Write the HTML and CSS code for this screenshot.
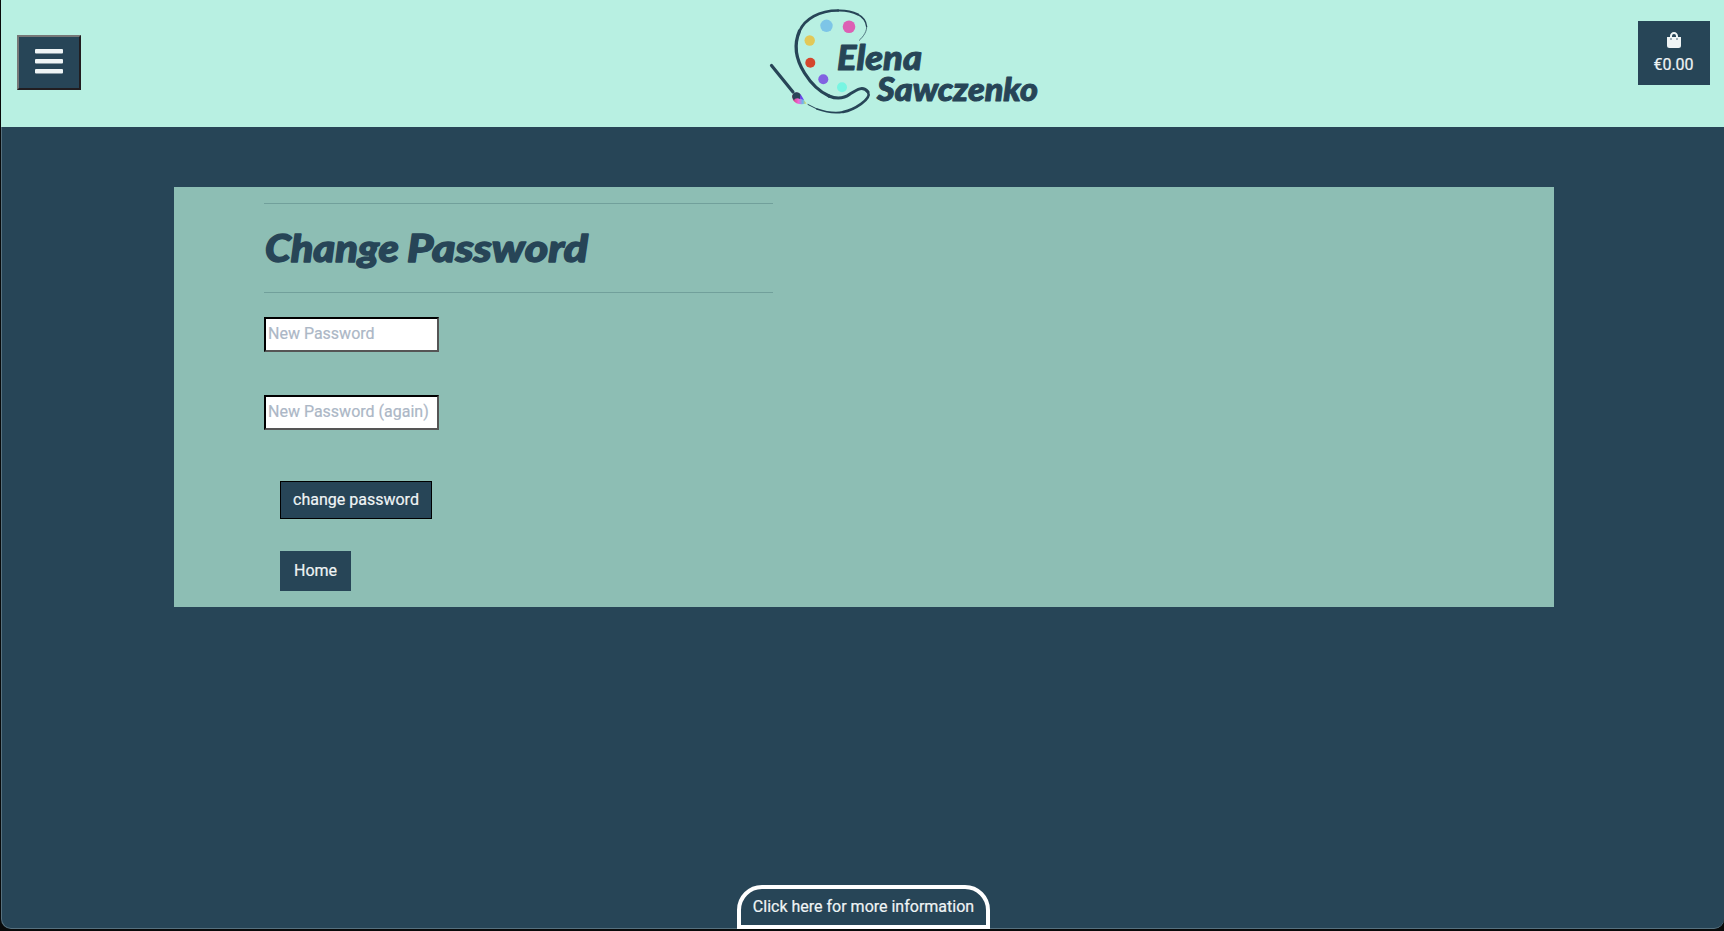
FILE: index.html
```html
<!DOCTYPE html>
<html lang="en">
<head>
<meta charset="utf-8">
<title>Change Password - Elena Sawczenko</title>
<link rel="stylesheet" href="styles.css">
</head>
<body>
<div class="window">
  <header class="header">
    <button class="menu" aria-label="Menu"><svg width="28" height="32" viewBox="0 0 28 32"><g fill="#eff4f5"><rect y="3" width="28" height="4.600" rx="1"/><rect y="13" width="28" height="4.600" rx="1"/><rect y="23" width="28" height="4.600" rx="1"/></g></svg></button>
    <svg class="logo" width="290" height="127" viewBox="0 0 290 127" role="img" aria-label="Elena Sawczenko">
      <defs><linearGradient id="tip" x1="0" y1="0" x2="1" y2="0"><stop offset="0" stop-color="#d33c70"/><stop offset=".45" stop-color="#ed66d7"/><stop offset=".75" stop-color="#67b8ed"/><stop offset="1" stop-color="#f0df45"/></linearGradient></defs>
      <g fill="none" stroke="#274557" stroke-linecap="round">
        <path d="M99.300 40.300C104 36 107 31 106.600 26.500" stroke-width="1" stroke-opacity=".7"/>
        <path d="M106.600 26.500C106 21 103 17 98 14.500" stroke-width="1.400"/>
        <path d="M98 14.500C92 11.500 85 10.300 78 10.500" stroke-width="2"/>
        <path d="M78 10.500C59 10.500 45 19 39.500 31" stroke-width="2.600"/>
        <path d="M39.500 31C33 46 37 61 44.500 73C52 85 60 92 69 96" stroke-width="3.300"/>
        <path d="M69 96C76 99 84 98.500 90 94C97 89.500 103 85.500 108 92" stroke-width="3"/>
        <path d="M108 92C112 99 94 110 83 112" stroke-width="2.500"/>
        <path d="M83 112C74 113.500 64 111.500 57 109" stroke-width="1.800"/>
        <path d="M57 109L48 104.500" stroke-width="1"/>
        <path d="M11.500 65.500L33 92" stroke-width="3.200"/>
      </g>
      <path d="M32 96C35 91 40 92 41 96L46.500 103.500C41 105 35 104 33 100Z" fill="url(#tip)"/>
      <path d="M32.500 98C31 92 39 90 41 95.500L40 99C37 97.500 34.500 98.500 34 100.500Z" fill="#274557"/>
      <path d="M40.500 94L44 100L40 98.500Z" fill="#6944ed"/>
      <circle cx="66.500" cy="25.800" r="6.200" fill="#7dc5e7"/><circle cx="89" cy="26.800" r="6.300" fill="#dc60b4"/>
      <circle cx="49.700" cy="40.500" r="5.200" fill="#e2c858"/><circle cx="50.300" cy="62.700" r="5" fill="#d4462d"/>
      <circle cx="63.300" cy="79.300" r="5" fill="#8162e1"/><circle cx="82" cy="87.200" r="5" fill="#77f5e2"/>
      <text class="brand" x="77" y="69.500" textLength="85" lengthAdjust="spacingAndGlyphs">Elena</text>
      <text class="brand brand-last" x="117" y="100.500" textLength="161" lengthAdjust="spacingAndGlyphs">Sawczenko</text>
    </svg>
    <a class="bag"><svg width="14" height="16" viewBox="0 0 448 512"><path fill="#eff4f5" d="M352 160V128C352 57 295 0 224 0S96 57 96 128v32H0v272a80 80 0 0 0 80 80h288a80 80 0 0 0 80-80V160zM160 128a64 64 0 0 1 128 0v32H160zm160 120a24 24 0 1 1 0-48 24 24 0 0 1 0 48zm-192 0a24 24 0 1 1 0-48 24 24 0 0 1 0 48z"/></svg><span>€0.00</span></a>
  </header>
  <main class="card">
    <div class="heading"><h1><svg width="330" height="60"><text class="title" x="1" y="37" textLength="134" lengthAdjust="spacingAndGlyphs">Change</text><text class="title" x="143" y="37" textLength="181" lengthAdjust="spacingAndGlyphs">Password</text></svg></h1></div>
    <form class="form">
      <input type="password" placeholder="New Password">
      <input type="password" placeholder="New Password (again)">
      <button type="button" class="submit">change password</button>
      <a class="home">Home</a>
    </form>
  </main>
  <button class="info">Click here for more information</button>
</div>
</body>
</html>
```
FILE: styles.css
```css
* { box-sizing: border-box; }
body { margin: 0; height: 931px; overflow: hidden; background: #080a0a; font: 16px/24px Roboto, sans-serif; color: #eff4f5; -webkit-text-stroke: .2px; }
svg { -webkit-text-stroke: 0; }
button, input { font: inherit; color: inherit; margin: 0; border-radius: 0; }
.window { height: 929px; margin-left: 1px; display: flex; flex-direction: column; background: #274557; border: solid #56707e; border-width: 0 0 1px 1px; border-radius: 0 0 10px 10px; }
.header { height: 127px; flex: none; margin-left: -1px; background: #b8f0e2; display: grid; grid-template-columns: 759px 290px 1fr; align-items: start; }
.menu { width: 64px; height: 55px; margin: 35px 0 0 16px; padding: 0; background: #274557; border: 2px solid; border-color: #777 #211d20 #211d20 #777; display: flex; align-items: flex-start; justify-content: center; }
.menu svg { margin-top: 9px; }
.logo { display: block; }
.brand { font: italic 900 35px Lato, sans-serif; fill: #274557; stroke: #274557; stroke-width: 1px; stroke-linejoin: round; }
.brand-last { font-size: 32px; }
.bag { justify-self: end; width: 72px; height: 64px; margin: 21px 14px 0 0; padding-top: 11px; background: #274557; display: flex; flex-direction: column; align-items: center; }
.bag svg { flex: none; }
.bag span { margin-top: 5px; line-height: 24px; margin-right: 1px; }
.card { width: 1380px; height: 420px; margin: 60px 0 0 172px; padding: 16px 90px; background: #8dbeb4; flex: none; }
.heading { width: 509px; height: 90px; border: solid #71a09b; border-width: 1px 0; padding-top: 21px; }
h1 { margin: 0; height: 60px; }
h1 svg { display: block; }
.title { font: italic 900 38px Lato, sans-serif; fill: #274557; stroke: #274557; stroke-width: 1.4px; stroke-linejoin: round; }
.form { display: flex; flex-direction: column; align-items: flex-start; padding-top: 24px; }
.form input { width: 175px; height: 35px; margin-bottom: 43px; padding: 0 2px 2px; border: 2px solid; border-color: #000 #555 #555 #000; background: #fff; }
.form input::placeholder { color: #acb7c6; opacity: 1; }
.submit { width: 152px; height: 38px; margin: 8px 0 32px 16px; padding: 0 0 1px; background: #274557; border: 1px solid #000; white-space: nowrap; }
.home { width: 71px; height: 40px; margin-left: 16px; padding: 8px 14px; background: #274557; }
.info { width: 253px; height: 44px; margin: auto 0 -1px 735px; padding: 0; border: 4px solid #fff; border-radius: 25px 25px 0 0; background: #274557; white-space: nowrap; }
```
